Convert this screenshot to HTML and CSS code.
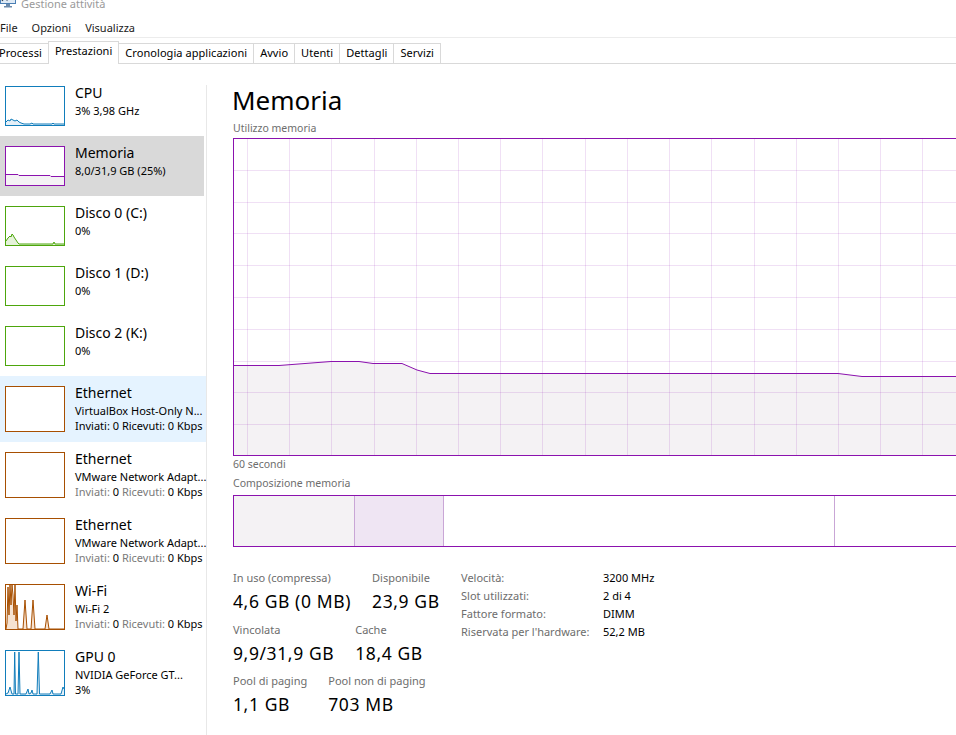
FILE: index.html
```html
<!DOCTYPE html>
<html lang="it">
<head>
<meta charset="utf-8">
<title>Gestione attività</title>
<link rel="stylesheet" href="styles.css">
</head>
<body>
<div class="window">
  <div class="titlebar">
    <div class="title-inner">
      <svg class="app-icon" width="16" height="16" viewBox="0 0 16 16">
        <rect x="0.5" y="1.5" width="15" height="10" fill="#dfeaf5" stroke="#4a7fb5"/>
        <polyline points="2,9 5,5 7,8 9,4 11,7 14,3" fill="none" stroke="#2b3d50" stroke-width="1.2"/>
        <rect x="6" y="12" width="4" height="2" fill="#6d8bab"/>
        <rect x="4" y="14" width="8" height="1.5" fill="#6d8bab"/>
      </svg>
      <span class="title-text">Gestione attività</span>
    </div>
  </div>
  <div class="menubar">
    <span class="menu-item">File</span>
    <span class="menu-item">Opzioni</span>
    <span class="menu-item">Visualizza</span>
  </div>
  <div class="tabs">
    <div class="tab">Processi</div>
    <div class="tab active">Prestazioni</div>
    <div class="tab">Cronologia applicazioni</div>
    <div class="tab">Avvio</div>
    <div class="tab">Utenti</div>
    <div class="tab">Dettagli</div>
    <div class="tab">Servizi</div>
  </div>
  <div class="content">
    <div class="sidebar">
      <div class="item">
        <div class="thumb cpu">
          <svg viewBox="0 0 58 38" preserveAspectRatio="none">
            <polygon class="fill" points="0,38 0,35 2,33 4,34 5,32 7,33 9,34 11,33 13,35 15,36 18,37 24,37 26,36 27,37 46,37 47,36 48,37 58,37 58,38"/>
            <polyline class="line" points="0,35 2,33 4,34 5,32 7,33 9,34 11,33 13,35 15,36 18,37 24,37 26,36 27,37 46,37 47,36 48,37 58,37"/>
          </svg>
        </div>
        <div class="info">
          <div class="name">CPU</div>
          <div class="sub">3% 3,98 GHz</div>
        </div>
      </div>
      <div class="item selected">
        <div class="thumb mem">
          <svg viewBox="0 0 58 38" preserveAspectRatio="none">
            <polygon class="fill" points="0,27.5 12,27.5 13,28.5 44,28.5 45,29.5 58,29.5 58,38 0,38"/>
            <polyline class="line" points="0,27.5 12,27.5 13,28.5 44,28.5 45,29.5 58,29.5"/>
          </svg>
        </div>
        <div class="info">
          <div class="name">Memoria</div>
          <div class="sub">8,0/31,9 GB (25%)</div>
        </div>
      </div>
      <div class="item">
        <div class="thumb disk">
          <svg viewBox="0 0 58 38" preserveAspectRatio="none">
            <polygon class="fill" points="0,38 0,34 2,31 4,29 5,30 6,27 7,28 8,30 10,33 12,36 13,37 47,37 48,35 49,37 58,37 58,38"/>
            <polyline class="line" points="0,34 2,31 4,29 5,30 6,27 7,28 8,30 10,33 12,36 13,37 47,37 48,35 49,37 58,37"/>
          </svg>
        </div>
        <div class="info">
          <div class="name">Disco 0 (C:)</div>
          <div class="sub">0%</div>
        </div>
      </div>
      <div class="item">
        <div class="thumb disk"></div>
        <div class="info">
          <div class="name">Disco 1 (D:)</div>
          <div class="sub">0%</div>
        </div>
      </div>
      <div class="item">
        <div class="thumb disk"></div>
        <div class="info">
          <div class="name">Disco 2 (K:)</div>
          <div class="sub">0%</div>
        </div>
      </div>
      <div class="item tall hover">
        <div class="thumb net"></div>
        <div class="info">
          <div class="name">Ethernet</div>
          <div class="sub">VirtualBox Host-Only N...</div>
          <div class="sub">Inviati: 0 Ricevuti: 0 Kbps</div>
        </div>
      </div>
      <div class="item tall">
        <div class="thumb net"></div>
        <div class="info">
          <div class="name">Ethernet</div>
          <div class="sub">VMware Network Adapt...</div>
          <div class="sub"><span class="dim">Inviati:</span> 0 <span class="dim">Ricevuti:</span> 0 Kbps</div>
        </div>
      </div>
      <div class="item tall">
        <div class="thumb net"></div>
        <div class="info">
          <div class="name">Ethernet</div>
          <div class="sub">VMware Network Adapt...</div>
          <div class="sub"><span class="dim">Inviati:</span> 0 <span class="dim">Ricevuti:</span> 0 Kbps</div>
        </div>
      </div>
      <div class="item tall">
        <div class="thumb net">
          <svg viewBox="0 0 58 44" preserveAspectRatio="none">
            <polygon class="fill" points="0,44 1,38 2,2 3,30 4,0 5,20 6,0 7,10 8,30 9,0 10,36 11,20 12,44 17,44 19,15 21,44 25,44 27,15 29,44 39,44 41,30 43,44"/>
            <polyline class="line" points="0,44 1,38 2,2 3,30 4,0 5,20 6,0 7,10 8,30 9,0 10,36 11,20 12,44 17,44 19,15 21,44 25,44 27,15 29,44 39,44 41,30 43,44 58,44"/>
          </svg>
        </div>
        <div class="info">
          <div class="name">Wi-Fi</div>
          <div class="sub">Wi-Fi 2</div>
          <div class="sub"><span class="dim">Inviati:</span> 0 <span class="dim">Ricevuti:</span> 0 Kbps</div>
        </div>
      </div>
      <div class="item tall">
        <div class="thumb gpu">
          <svg viewBox="0 0 58 44" preserveAspectRatio="none">
            <polygon class="fill" points="0,44 0,43 2,42 4,36 6,43 8,43 8.7,1 9.5,43 12,43 13,1 14,43 20,43 22,38 23,43 25,42 26,39 27,43 31,43 32.3,1 33.5,43 44,43 46,39 47,43 55,43 57,36 58,38 58,44"/>
            <polyline class="line" points="0,43 2,42 4,36 6,43 8,43 8.7,1 9.5,43 12,43 13,1 14,43 20,43 22,38 23,43 25,42 26,39 27,43 31,43 32.3,1 33.5,43 44,43 46,39 47,43 55,43 57,36 58,38"/>
          </svg>
        </div>
        <div class="info">
          <div class="name">GPU 0</div>
          <div class="sub">NVIDIA GeForce GT...</div>
          <div class="sub">3%</div>
        </div>
      </div>
    </div>

    <div class="main">
      <div class="heading">Memoria</div>
      <div class="caption cap-top">Utilizzo memoria</div>
      <div class="graph">
        <svg width="848" height="316" viewBox="0 0 848 316">
          <polygon class="g-fill" points="0,226.5 45,226.5 97,222.5 125,222.5 139,224.5 168,224.5 183,231 196,234.5 604,234.5 628,237.5 848,237.5 848,316 0,316"/>
          <g class="grid">
            <line x1="13.5" y1="0" x2="13.5" y2="316"/>
            <line x1="55.5" y1="0" x2="55.5" y2="316"/>
            <line x1="97.5" y1="0" x2="97.5" y2="316"/>
            <line x1="140.5" y1="0" x2="140.5" y2="316"/>
            <line x1="182.5" y1="0" x2="182.5" y2="316"/>
            <line x1="224.5" y1="0" x2="224.5" y2="316"/>
            <line x1="266.5" y1="0" x2="266.5" y2="316"/>
            <line x1="308.5" y1="0" x2="308.5" y2="316"/>
            <line x1="351.5" y1="0" x2="351.5" y2="316"/>
            <line x1="393.5" y1="0" x2="393.5" y2="316"/>
            <line x1="435.5" y1="0" x2="435.5" y2="316"/>
            <line x1="477.5" y1="0" x2="477.5" y2="316"/>
            <line x1="520.5" y1="0" x2="520.5" y2="316"/>
            <line x1="562.5" y1="0" x2="562.5" y2="316"/>
            <line x1="604.5" y1="0" x2="604.5" y2="316"/>
            <line x1="646.5" y1="0" x2="646.5" y2="316"/>
            <line x1="688.5" y1="0" x2="688.5" y2="316"/>
            <line x1="730.5" y1="0" x2="730.5" y2="316"/>
            <line x1="772.5" y1="0" x2="772.5" y2="316"/>
            <line x1="815.5" y1="0" x2="815.5" y2="316"/>
            <line x1="0" y1="31.5" x2="848" y2="31.5"/>
            <line x1="0" y1="63.5" x2="848" y2="63.5"/>
            <line x1="0" y1="94.5" x2="848" y2="94.5"/>
            <line x1="0" y1="126.5" x2="848" y2="126.5"/>
            <line x1="0" y1="158.5" x2="848" y2="158.5"/>
            <line x1="0" y1="190.5" x2="848" y2="190.5"/>
            <line x1="0" y1="222.5" x2="848" y2="222.5"/>
            <line x1="0" y1="253.5" x2="848" y2="253.5"/>
            <line x1="0" y1="285.5" x2="848" y2="285.5"/>
          </g>
          <polyline class="g-line" points="0,226.5 45,226.5 97,222.5 125,222.5 139,224.5 168,224.5 183,231 196,234.5 604,234.5 628,237.5 848,237.5"/>
        </svg>
      </div>
      <div class="caption cap-sec">60 secondi</div>
      <div class="caption cap-comp">Composizione memoria</div>
      <div class="comp">
        <div class="seg seg-used"></div>
        <div class="seg seg-mod"></div>
        <div class="seg seg-standby"></div>
        <div class="seg seg-free"></div>
      </div>
      <div class="stats">
        <div class="stats-left">
          <div class="stat-row">
            <div class="stat"><div class="stat-label">In uso (compressa)</div><div class="stat-value">4,6 GB (0 MB)</div></div>
            <div class="stat"><div class="stat-label">Disponibile</div><div class="stat-value">23,9 GB</div></div>
          </div>
          <div class="stat-row">
            <div class="stat"><div class="stat-label">Vincolata</div><div class="stat-value">9,9/31,9 GB</div></div>
            <div class="stat"><div class="stat-label">Cache</div><div class="stat-value">18,4 GB</div></div>
          </div>
          <div class="stat-row">
            <div class="stat"><div class="stat-label">Pool di paging</div><div class="stat-value">1,1 GB</div></div>
            <div class="stat"><div class="stat-label">Pool non di paging</div><div class="stat-value">703 MB</div></div>
          </div>
        </div>
        <div class="specs">
          <div class="spec-label">Velocità:</div><div class="spec-value">3200 MHz</div>
          <div class="spec-label">Slot utilizzati:</div><div class="spec-value">2 di 4</div>
          <div class="spec-label">Fattore formato:</div><div class="spec-value">DIMM</div>
          <div class="spec-label">Riservata per l'hardware:</div><div class="spec-value">52,2 MB</div>
        </div>
      </div>
    </div>
  </div>
</div>
</body>
</html>
```

FILE: styles.css
```css
* { box-sizing: border-box; }

html, body {
  margin: 0;
  padding: 0;
  background: #ffffff;
}

body {
  width: 956px;
  height: 735px;
  overflow: hidden;
  font-family: "Noto Sans", "Open Sans", sans-serif;
  font-size: 11px;
  color: #000;
}

.window {
  width: 956px;
  height: 735px;
  display: flex;
  flex-direction: column;
  overflow: hidden;
}

/* title bar (cut off at the top) */
.titlebar {
  height: 18px;
  flex: none;
  overflow: hidden;
}

.title-inner {
  display: flex;
  align-items: flex-start;
  margin-top: -4px;
  height: 16px;
}

.app-icon {
  flex: none;
  margin-top: -4px;
  margin-right: 5px;
}

.title-text {
  line-height: 16px;
  color: #9a9a9a;
  font-size: 11px;
}

/* menu */
.menubar {
  flex: none;
  height: 20px;
  display: flex;
  margin-left: -7px;
  border-bottom: 1px solid #ececec;
}

.menu-item {
  padding: 0 7px;
  line-height: 19px;
  color: #1a1a1a;
}

/* tabs */
.tabs {
  flex: none;
  height: 26px;
  display: flex;
  align-items: flex-end;
  margin-left: -8px;
  border-bottom: 1px solid #d9d9d9;
}

.tab {
  height: 20px;
  padding: 0 6px 1px;
  line-height: 18px;
  border: 1px solid #d9d9d9;
  border-bottom: none;
  border-left: none;
  background: #ffffff;
  white-space: nowrap;
  letter-spacing: 0.05px;
}

.tab:first-child {
  border-left: 1px solid #d9d9d9;
}

.tab.active {
  height: 23px;
  margin-bottom: -1px;
  padding: 0 6px 1px;
  line-height: 18px;
  border-left: 1px solid #d9d9d9;
  margin-left: -1px;
  background: #ffffff;
}

/* content */
.content {
  flex: 1;
  display: flex;
  min-height: 0;
}

.sidebar {
  flex: none;
  width: 207px;
  padding-top: 12px;
  overflow: hidden;
  background: linear-gradient(#e8e8e8, #e8e8e8) no-repeat right 0 top 21px / 1px 100%;
}

.item {
  width: 204px;
  height: 60px;
  display: flex;
  align-items: flex-start;
  padding-top: 10px;
  white-space: nowrap;
}

.item.tall { height: 66px; }

.item.selected { background: #d9d9d9; }
.item.hover { background: #e5f3ff; width: 206px; }

.thumb {
  flex: none;
  width: 60px;
  height: 40px;
  margin-left: 5px;
  border: 1px solid #117dbb;
  background: #ffffff;
}

.item.tall .thumb { height: 46px; }

.thumb svg {
  display: block;
  width: 100%;
  height: 100%;
}

.thumb .line { fill: none; stroke-width: 1; vector-effect: non-scaling-stroke; }

.thumb.cpu, .thumb.gpu { border-color: #117dbb; }
.thumb.cpu .line, .thumb.gpu .line { stroke: #117dbb; }
.thumb.cpu .fill, .thumb.gpu .fill { fill: #e6f0f8; }

.thumb.mem { border-color: #8b12ae; }
.thumb.mem .line { stroke: #8b12ae; }
.thumb.mem .fill { fill: #f4f2f4; }

.thumb.disk { border-color: #4da60c; }
.thumb.disk .line { stroke: #4da60c; }
.thumb.disk .fill { fill: #e5f2da; }

.thumb.net { border-color: #a74f01; }
.thumb.net .line { stroke: #a74f01; }
.thumb.net .fill { fill: #f6e2d0; }

.info {
  margin-left: 10px;
  margin-top: -3px;
  min-width: 0;
}

.name {
  font-size: 14px;
  line-height: 20px;
  color: #000;
}

.sub {
  font-size: 11px;
  line-height: 15px;
  color: #000;
}

.dim { color: #7a7a7a; }

/* main panel */
.main {
  flex: 1;
  min-width: 0;
  overflow: hidden;
  padding-left: 26px;
  padding-top: 19px;
}

.heading {
  font-size: 26px;
  line-height: 34px;
  margin-left: -1px;
  color: #000;
}

.caption {
  font-size: 10.5px;
  line-height: 14px;
  color: #6d6d6d;
  white-space: nowrap;
}

.cap-top {
  margin-top: 4px;
  margin-bottom: 3px;
}

.cap-sec { margin-top: 1px; }

.cap-comp {
  margin-top: 5px;
  margin-bottom: 5px;
}

.graph {
  width: 850px;
  height: 318px;
  border: 1px solid #8b12ae;
  background: #ffffff;
}

.graph svg { display: block; }

.g-fill { fill: #f4f2f4; }
.grid line { stroke: rgba(139, 18, 174, 0.13); stroke-width: 1; }
.g-line { fill: none; stroke: #8b12ae; stroke-width: 1; }

.comp {
  width: 850px;
  height: 52px;
  border: 1px solid #8b12ae;
  display: flex;
}

.seg { height: 100%; }
.seg-used { width: 120px; background: #f4f2f4; }
.seg-mod { width: 89px; background: #efe5f3; border-left: 1px solid #c9a6d6; }
.seg-standby { width: 391px; background: #ffffff; border-left: 1px solid #c9a6d6; }
.seg-free { flex: 1; background: #ffffff; border-left: 1px solid #c9a6d6; }

.stats {
  display: flex;
  margin-top: 24px;
}

.stats-left {
  flex: none;
  width: 228px;
  display: flex;
  flex-direction: column;
  gap: 9.5px;
}

.stat-row {
  display: flex;
  gap: 21px;
}

.stat-label {
  font-size: 11px;
  line-height: 14px;
  color: #6d6d6d;
  white-space: nowrap;
}

.stat-value {
  font-size: 17.5px;
  line-height: 24px;
  margin-top: 4px;
  letter-spacing: 0.6px;
  white-space: nowrap;
  color: #000;
}

.specs {
  display: grid;
  grid-template-columns: 142px auto;
  font-size: 11px;
  line-height: 18px;
  align-content: start;
  margin-top: -2px;
}

.spec-label { color: #6d6d6d; white-space: nowrap; }
.spec-value { color: #000; white-space: nowrap; }
```
